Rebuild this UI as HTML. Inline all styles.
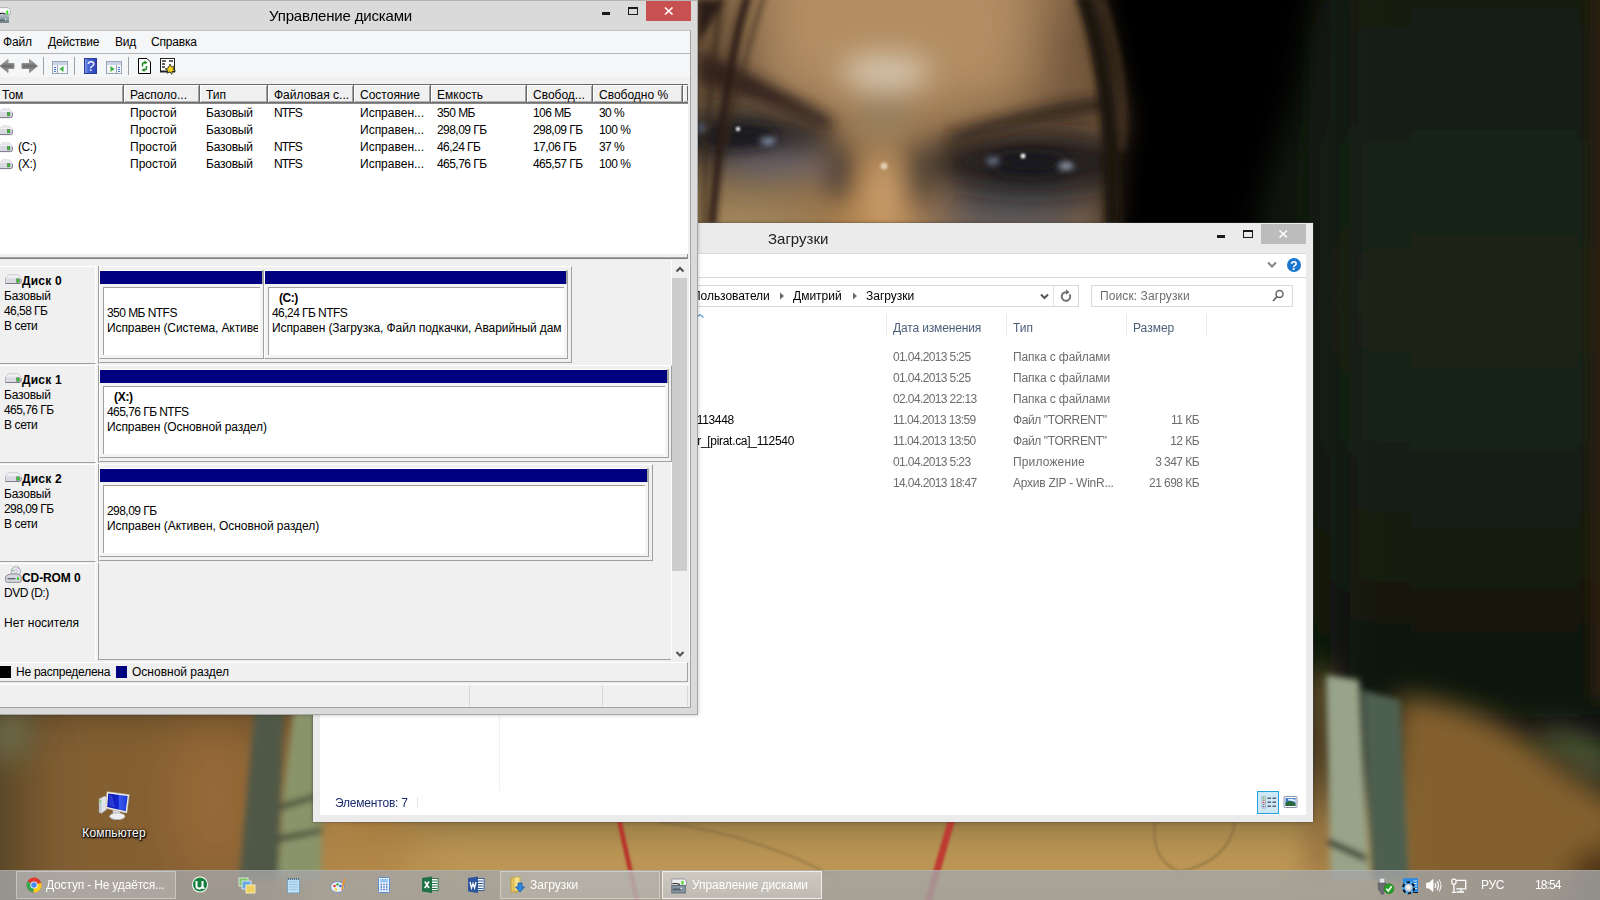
<!DOCTYPE html>
<html lang="ru"><head><meta charset="utf-8"><title>Рабочий стол</title>
<style>
*{box-sizing:border-box;margin:0;padding:0}
html,body{width:1600px;height:900px;overflow:hidden;background:#141b13}
body{font-family:"Liberation Sans",sans-serif;font-size:12px;color:#000;position:relative}
.abs,.t{position:absolute}
.t{white-space:nowrap;line-height:16px;font-size:12px}
.b{font-weight:bold}
#wall{position:absolute;left:0;top:0;width:1600px;height:900px}
svg{position:absolute;overflow:visible}
.win{position:absolute;overflow:hidden}
.n{letter-spacing:-0.55px}
.g{color:#6d6d6d}

</style></head><body>
<svg id="wall" width="1600" height="900" viewBox="0 0 1600 900">
<defs>
<filter id="b30" x="-20%" y="-20%" width="140%" height="140%"><feGaussianBlur stdDeviation="30"/></filter>
<filter id="b60" x="-50%" y="-50%" width="200%" height="200%"><feGaussianBlur stdDeviation="60"/></filter>
<filter id="b14" x="-20%" y="-20%" width="140%" height="140%"><feGaussianBlur stdDeviation="14"/></filter>
<filter id="b7" x="-20%" y="-20%" width="140%" height="140%"><feGaussianBlur stdDeviation="7"/></filter>
<filter id="b3" x="-20%" y="-20%" width="140%" height="140%"><feGaussianBlur stdDeviation="3"/></filter>
<filter id="b1" x="-20%" y="-20%" width="140%" height="140%"><feGaussianBlur stdDeviation="1.2"/></filter>
<linearGradient id="gg" x1="0" y1="0" x2="0" y2="1"><stop offset="0" stop-color="#121910"/><stop offset=".45" stop-color="#1b2517"/><stop offset=".75" stop-color="#151c11"/><stop offset="1" stop-color="#0d1109"/></linearGradient>
</defs>
<rect width="1600" height="900" fill="#11170f"/>
<g filter="url(#b30)"><rect x="1330" y="-60" width="330" height="800" fill="url(#gg)"/></g>
<g filter="url(#b7)"><rect x="1590" y="-30" width="40" height="730" fill="#2a1b11"/></g>
<!-- face skin -->
<g filter="url(#b30)">
<ellipse cx="895" cy="120" rx="300" ry="330" fill="#93704a"/>
<ellipse cx="890" cy="30" rx="200" ry="85" fill="#b48e64"/>
<ellipse cx="745" cy="142" rx="90" ry="40" fill="#403a36"/>
<ellipse cx="1035" cy="172" rx="110" ry="48" fill="#302e2e"/>
<ellipse cx="740" cy="225" rx="75" ry="30" fill="#ac9064"/>
<ellipse cx="882" cy="230" rx="38" ry="55" fill="#c89458"/>
<ellipse cx="1005" cy="225" rx="85" ry="22" fill="#59606a"/>
<ellipse cx="715" cy="40" rx="45" ry="70" fill="#5e4936"/>
<ellipse cx="1075" cy="50" rx="40" ry="80" fill="#6a5038"/>
</g>
<!-- eye sockets / shadows -->
<g filter="url(#b14)">
<ellipse cx="886" cy="72" rx="45" ry="18" fill="#d4c4ac"/>
<ellipse cx="750" cy="137" rx="80" ry="22" fill="#2a2826"/>
<ellipse cx="1032" cy="162" rx="100" ry="26" fill="#201e1f"/>
<ellipse cx="778" cy="166" rx="55" ry="9" fill="#79727c"/>
<ellipse cx="838" cy="172" rx="13" ry="28" fill="#40362e"/>
<ellipse cx="919" cy="174" rx="13" ry="32" fill="#4a4036"/>
<ellipse cx="884" cy="192" rx="14" ry="38" fill="#cfa270"/>
<ellipse cx="884" cy="118" rx="30" ry="22" fill="#98805e"/>
</g>
<!-- brows and eyes -->
<g filter="url(#b7)">
<path d="M698 50 Q765 78 834 122 L828 130 Q760 98 698 84Z" fill="#30241c"/>
<path d="M946 137 Q1030 106 1110 97 L1110 110 Q1030 119 950 143Z" fill="#261d17"/>
<ellipse cx="738" cy="136" rx="40" ry="11" fill="#14181c"/>
<ellipse cx="1030" cy="164" rx="40" ry="11" fill="#12161a"/>
</g>
<g filter="url(#b3)">
<ellipse cx="768" cy="141" rx="8" ry="3.500" fill="#8696ae"/>
<ellipse cx="993" cy="161" rx="7" ry="3.500" fill="#6e7c94"/>
<ellipse cx="1066" cy="166" rx="8" ry="4" fill="#929cac"/>
<ellipse cx="702" cy="128" rx="5" ry="5" fill="#55647e"/>
</g>
<!-- hair -->
<g filter="url(#b14)">
<path d="M1085 -40 L1320 -40 L1296 90 L1262 200 L1250 300 L1100 300 L1120 120Z" fill="#020202"/>
</g>
<g filter="url(#b3)">
<path d="M748 -5 Q726 60 712 225" stroke="#2a1d14" stroke-width="8" fill="none"/>
<path d="M722 -5 Q708 80 703 225" stroke="#33251a" stroke-width="5" fill="none" opacity=".8"/>
<path d="M764 -5 Q740 70 724 150" stroke="#3a2a1c" stroke-width="3" fill="none"/>
<path d="M698 0 L724 0 L698 44Z" fill="#2a1d14"/>
<path d="M1083 -5 Q1112 70 1114 225" stroke="#1a120c" stroke-width="16" fill="none"/>
<path d="M1102 0 Q1130 80 1122 150" stroke="#4a3420" stroke-width="4" fill="none"/>
</g>
<g filter="url(#b1)">
<circle cx="738" cy="129" r="2.300" fill="#dfe8e8"/>
<circle cx="1023" cy="156" r="2.500" fill="#eef2ee"/>
<circle cx="884" cy="166" r="3.500" fill="#e2ccb0"/>
</g>
<!-- lower body skin -->
<g filter="url(#b30)">
<rect x="-60" y="690" width="460" height="260" fill="#835f30"/>
<rect x="-70" y="690" width="95" height="260" fill="#4e4226"/>
<ellipse cx="215" cy="800" rx="40" ry="90" fill="#9a6a38"/>
<rect x="300" y="800" width="1150" height="140" fill="#bc9654"/>
<path d="M1400 740 Q1520 740 1660 850 L1660 940 L1400 940Z" fill="#84602e"/>
<ellipse cx="1450" cy="830" rx="50" ry="50" fill="#90703a"/>
<ellipse cx="370" cy="850" rx="45" ry="40" fill="#ac7c3e"/>
<ellipse cx="1600" cy="880" rx="60" ry="60" fill="#4a3018"/>
</g>
<g filter="url(#b14)">
<path d="M1396 696 Q1480 704 1540 755 T1625 805 L1625 900 L1396 900Z" fill="#84602e"/>
<ellipse cx="1610" cy="885" rx="45" ry="40" fill="#4e3419"/>
<path d="M1540 742 Q1580 760 1610 790 L1610 750 Q1580 735 1545 728Z" fill="#5c6340"/>
<rect x="1310" y="670" width="20" height="210" fill="#8a6638"/>
<ellipse cx="10" cy="735" rx="22" ry="26" fill="#6c6a48"/>
</g>
<g filter="url(#b3)">
<path d="M255 705 L284 705 L278 880 L239 880Z" fill="#4f5946"/>
<path d="M294 705 L324 705 L321 880 L278 880 L284 790Z" fill="#8a946a"/>
<path d="M281 804 L322 792 L322 797 L281 810Z" fill="#3e4432"/>
<path d="M278 836 L322 828 L322 833 L278 842Z" fill="#3e4432"/>
<path d="M1326 675 L1359 680 L1369 880 L1331 880Z" fill="#98a48a"/>
<path d="M1362 690 L1400 700 L1409 880 L1372 880Z" fill="#4e5e50"/>
<path d="M1328 838 L1366 855 L1366 862 L1328 845Z" fill="#2c3024"/>
</g>
<g filter="url(#b1)">
<path d="M618 815 L638 905" stroke="#b8322a" stroke-width="4.500" fill="none"/>
<path d="M953 815 L927 905" stroke="#bd3a30" stroke-width="7" fill="none"/>
<path d="M660 822 Q760 835 840 880" stroke="#6b5a36" stroke-width="2" fill="none" opacity=".4"/>
<path d="M1155 822 Q1150 860 1180 872 Q1230 860 1235 822" stroke="#6b5a36" stroke-width="2" fill="none" opacity=".45"/>
</g>
</svg>

<svg style="left:96px;top:790px" width="38" height="32" viewBox="0 0 38 32"><defs><linearGradient id="scr" x1="0" y1="0" x2="1" y2="0"><stop offset="0" stop-color="#0a12a8"/><stop offset=".55" stop-color="#1426d0"/><stop offset=".56" stop-color="#3a5cf0"/><stop offset="1" stop-color="#2038d8"/></linearGradient></defs><path d="M3.300 8.700 L8.500 6.200 L10.500 6.800 L10.500 19.500 L5.500 23.200 L3.300 22.200Z" fill="#dfe3e8" stroke="#aeb4bc" stroke-width=".6"/><path d="M3.300 8.700 L5.500 9.500 L5.500 23.200 L3.300 22.200Z" fill="#c4cad2"/><rect x="3.800" y="10.600" width="1.300" height="1.800" fill="#4de02a"/><path d="M16.500 20 L24 21.500 L24.500 25.500 L17.500 25Z" fill="#d4d8dc"/><ellipse cx="21.300" cy="26.300" rx="7.600" ry="3.300" fill="#eceef0" stroke="#b4bac2" stroke-width=".7"/><path d="M11 1.800 L33.200 4.700 L30.800 23 L9.800 18.200Z" fill="#f4f2e8" stroke="#c8c8c0" stroke-width=".6"/><path d="M12.300 3.400 L31.700 6 L29.700 21.300 L11.200 17Z" fill="url(#scr)"/><path d="M13 5 L16 5.400 L19.500 17.500 L12.500 16Z" fill="#3a58e8" opacity=".55"/></svg>
<div class="t " style="left:50px;top:825px;width:128px;text-align:center;color:#fff;text-shadow:0 1px 2px #000,0 0 3px #000,1px 1px 1px #000;letter-spacing:.15px">Компьютер</div>
<div class="abs" style="left:313px;top:223px;width:1000px;height:599px;background:#ebebeb;box-shadow:0 0 0 1px rgba(90,90,90,.25),0 0 4px rgba(0,0,0,.3)"></div>
<div class="t " style="left:768px;top:229px;font-size:15px;line-height:20px;color:#222">Загрузки</div>
<div class="abs" style="left:1261px;top:224px;width:45px;height:20px;background:#bcbcbc;"></div>
<svg style="left:1261px;top:224px" width="45" height="20" viewBox="0 0 45 20"><path d="M18.500 6.500 L26 13.500 M26 6.500 L18.500 13.500" stroke="#fff" stroke-width="1.600" fill="none"/></svg>
<div class="abs" style="left:1243px;top:230px;width:10px;height:8px;background:transparent;border:1px solid #1a1a1a;border-top-width:2px"></div>
<div class="abs" style="left:1217px;top:235px;width:8px;height:3px;background:#1a1a1a;"></div>
<div class="abs" style="left:320px;top:253px;width:986px;height:562px;background:#fff;"></div>
<div class="abs" style="left:320px;top:253px;width:986px;height:1px;background:#dadbdc;"></div>
<div class="abs" style="left:320px;top:277px;width:986px;height:1px;background:#dadbdc;"></div>
<svg style="left:1264px;top:257px" width="40" height="17" viewBox="0 0 40 17"><path d="M4 5.500 L8 9.500 L12 5.500" stroke="#858585" stroke-width="2" fill="none"/><circle cx="30" cy="8" r="7" fill="#1b76d0"/><text x="30" y="12.500" font-family="Liberation Sans,sans-serif" font-size="12" font-weight="bold" fill="#fff" text-anchor="middle">?</text></svg>
<div class="abs" style="left:600px;top:285px;width:479px;height:22px;background:#fff;border:1px solid #d9d9d9"></div>
<div class="abs" style="left:1053px;top:286px;width:1px;height:20px;background:#e3e3e3;"></div>
<div class="t " style="left:692px;top:288px;letter-spacing:-0.05px">Пользователи</div>
<div class="t " style="left:793px;top:288px;">Дмитрий</div>
<div class="t " style="left:866px;top:288px;">Загрузки</div>
<svg style="left:770px;top:285px" width="320" height="22" viewBox="0 0 320 22"><path d="M10 7.500 L14 11 L10 14.500Z M83 7.500 L87 11 L83 14.500Z" fill="#6a6a6a"/><path d="M271 9.500 L274.500 13 L278 9.500" stroke="#555" stroke-width="2" fill="none"/><path d="M299.700 9.400 A4.300 4.300 0 1 1 296 7.200" stroke="#6e6e6e" stroke-width="1.900" fill="none"/><path d="M296 4.300 L299.600 7.200 L296 9.800Z" fill="#6e6e6e"/></svg>
<div class="abs" style="left:1091px;top:285px;width:202px;height:22px;background:#fff;border:1px solid #d9d9d9"></div>
<div class="t " style="left:1100px;top:288px;color:#6d6d6d;letter-spacing:-0.1px;letter-spacing:0.1px">Поиск: Загрузки</div>
<svg style="left:1270px;top:288px" width="16" height="16" viewBox="0 0 16 16"><circle cx="9.500" cy="6" r="3.500" stroke="#666" stroke-width="1.500" fill="none"/><path d="M7 8.500 L3 13" stroke="#666" stroke-width="1.800"/></svg>
<div class="abs" style="left:886px;top:314px;width:1px;height:23px;background:#e8eaec;"></div>
<div class="abs" style="left:1006px;top:314px;width:1px;height:23px;background:#e8eaec;"></div>
<div class="abs" style="left:1126px;top:314px;width:1px;height:23px;background:#e8eaec;"></div>
<div class="abs" style="left:1206px;top:314px;width:1px;height:23px;background:#e8eaec;"></div>
<svg style="left:695px;top:313px" width="10" height="6" viewBox="0 0 10 6"><path d="M1.500 4.500 L5 1.500 L8.500 4.500" stroke="#5a9ad8" stroke-width="1.200" fill="none"/></svg>
<div class="t " style="left:893px;top:320px;color:#4c607a;letter-spacing:-0.15px">Дата изменения</div>
<div class="t " style="left:1013px;top:320px;color:#4c607a">Тип</div>
<div class="t " style="left:1133px;top:320px;color:#4c607a">Размер</div>
<div class="t n g" style="left:893px;top:349px;letter-spacing:-0.62px">01.04.2013 5:25</div>
<div class="t g" style="left:1013px;top:349px;letter-spacing:-0.1px">Папка с файлами</div>
<div class="t n g" style="left:893px;top:370px;letter-spacing:-0.62px">01.04.2013 5:25</div>
<div class="t g" style="left:1013px;top:370px;letter-spacing:-0.1px">Папка с файлами</div>
<div class="t n g" style="left:893px;top:391px;letter-spacing:-0.62px">02.04.2013 22:13</div>
<div class="t g" style="left:1013px;top:391px;letter-spacing:-0.1px">Папка с файлами</div>
<div class="t" style="right:866px;top:412px;letter-spacing:-0.3px">LARA_CROFT_113448</div>
<div class="t n g" style="left:893px;top:412px;letter-spacing:-0.62px">11.04.2013 13:59</div>
<div class="t g" style="left:1013px;top:412px;letter-spacing:-0.1px;letter-spacing:-0.4px">Файл "TORRENT"</div>
<div class="t g n" style="right:401px;top:412px">11 КБ</div>
<div class="t" style="right:806px;top:433px;letter-spacing:-0.3px">Tomb_Raider_[pirat.ca]_112540</div>
<div class="t n g" style="left:893px;top:433px;letter-spacing:-0.62px">11.04.2013 13:50</div>
<div class="t g" style="left:1013px;top:433px;letter-spacing:-0.1px;letter-spacing:-0.4px">Файл "TORRENT"</div>
<div class="t g n" style="right:401px;top:433px">12 КБ</div>
<div class="t n g" style="left:893px;top:454px;letter-spacing:-0.62px">01.04.2013 5:23</div>
<div class="t g" style="left:1013px;top:454px;letter-spacing:-0.1px;letter-spacing:0.15px">Приложение</div>
<div class="t g n" style="right:401px;top:454px">3 347 КБ</div>
<div class="t n g" style="left:893px;top:475px;letter-spacing:-0.62px">14.04.2013 18:47</div>
<div class="t g" style="left:1013px;top:475px;letter-spacing:-0.1px;letter-spacing:-0.25px">Архив ZIP - WinR...</div>
<div class="t g n" style="right:401px;top:475px">21 698 КБ</div>
<div class="abs" style="left:499px;top:314px;width:1px;height:477px;background:#f0f0f0;"></div>
<div class="t " style="left:335px;top:795px;color:#1c2c70;letter-spacing:-0.2px">Элементов: 7</div>
<div class="abs" style="left:417px;top:797px;width:1px;height:11px;background:#e5e5e5;"></div>
<div class="abs" style="left:1257px;top:791px;width:22px;height:23px;background:#cce8f7;border:1px solid #26a0da"></div>
<svg style="left:1257px;top:791px" width="45" height="23" viewBox="0 0 45 23"><g fill="#fff" stroke="#8a8f98" stroke-width=".8"><rect x="5" y="5.500" width="3.500" height="3.500" rx=".8"/><rect x="5" y="9.500" width="3.500" height="3.500" rx=".8"/><rect x="5" y="13.500" width="3.500" height="3.500" rx=".8"/></g><circle cx="6.750" cy="7.250" r=".8" fill="#393"/><circle cx="6.750" cy="11.250" r=".8" fill="#d22"/><circle cx="6.750" cy="15.250" r=".8" fill="#24c"/><path d="M10.500 7.250h3.500M15.500 7.250h3.500M10.500 11.250h3.500M15.500 11.250h3.500M10.500 15.250h3.500M15.500 15.250h3.500" stroke="#5a6070" stroke-width="1.300"/><rect x="27" y="5.500" width="13" height="11" rx="1" fill="#fff" stroke="#8a93a8"/><rect x="28.500" y="7" width="10" height="8" fill="#3a7ad0"/><path d="M28.500 15 L28.500 12 Q32 8 38.500 12.500 L38.500 15Z" fill="#2a6a3a"/><path d="M31 8 Q35 7 38.500 9 L38.500 11 Q34 9 31 9.500Z" fill="#dfeffc"/></svg>
<div class="win" style="left:0;top:0;width:720px;height:740px">
<div class="abs" style="left:-10px;top:0;width:708px;height:715px;background:#dadada;border:1px solid #a6a6a6;border-top-color:#b4b4b4;box-shadow:0 0 4px rgba(0,0,0,.25)"></div>
<div class="t " style="left:269px;top:6px;font-size:15px;line-height:20px;letter-spacing:-0.17px">Управление дисками</div>
<svg style="left:0;top:6px" width="12" height="18" viewBox="0 0 12 18"><defs><linearGradient id="ti1" x1="0" y1="0" x2="0" y2="1"><stop offset="0" stop-color="#e8e8ec"/><stop offset=".35" stop-color="#fff"/><stop offset="1" stop-color="#d4d4dc"/></linearGradient><linearGradient id="ti2" x1="0" y1="0" x2="0" y2="1"><stop offset="0" stop-color="#aebcc4"/><stop offset="1" stop-color="#6e7e88"/></linearGradient></defs><path d="M-1 1.500 H7 Q10.500 1.800 10.500 5 V7.500 Q10.500 9 9 9 H-1Z" fill="url(#ti1)" stroke="#a4a4b2" stroke-width=".7"/><path d="M0 7.500 Q2.500 6.800 5.500 8.200" stroke="#111" stroke-width="1" fill="none"/><rect x="6.300" y="4.500" width="1.900" height="4.200" fill="#3be01e"/><path d="M-1 9 H9 V17 H-1Z" fill="url(#ti2)"/><path d="M0 13.500 H6.500 V15 H0Z" fill="#5a6a74"/><rect x="5" y="12.700" width="1.300" height="1.600" fill="#f4f4f4"/></svg>
<div class="abs" style="left:646px;top:1px;width:45px;height:20px;background:#c75050;"></div>
<svg style="left:646px;top:1px" width="45" height="20" viewBox="0 0 45 20"><path d="M19 6.5 L26.5 13.5 M26.5 6.5 L19 13.5" stroke="#fff" stroke-width="1.700" fill="none"/></svg>
<div class="abs" style="left:628px;top:7px;width:10px;height:8px;background:transparent;border:1px solid #1a1a1a;border-top-width:2px"></div>
<div class="abs" style="left:602px;top:12px;width:8px;height:3px;background:#1a1a1a;"></div>
<div class="abs" style="left:-2px;top:30px;width:693px;height:678px;background:#f0f0f0;border:1px solid #a3a3a3;border-top-color:#c3c3c3"></div>
<div class="abs" style="left:0px;top:31px;width:690px;height:22px;background:#f5f6f7;"></div>
<div class="abs" style="left:0px;top:53px;width:690px;height:1px;background:#b2b4b8;"></div>
<div class="abs" style="left:0px;top:54px;width:690px;height:23px;background:#f5f6f7;"></div>
<div class="t " style="left:3px;top:34px;letter-spacing:-0.2px">Файл</div>
<div class="t " style="left:48px;top:34px;letter-spacing:-0.2px">Действие</div>
<div class="t " style="left:115px;top:34px;letter-spacing:-0.2px">Вид</div>
<div class="t " style="left:151px;top:34px;letter-spacing:-0.2px">Справка</div>
<svg style="left:0;top:56px" width="180" height="20" viewBox="0 0 180 20"><defs><linearGradient id="ag" x1="0" y1="0" x2="0" y2="1"><stop offset="0" stop-color="#b4b4b4"/><stop offset=".5" stop-color="#6c6c6c"/><stop offset="1" stop-color="#a4a4a4"/></linearGradient><linearGradient id="hg" x1="0" y1="0" x2="1" y2="0"><stop offset="0" stop-color="#8ea4ea"/><stop offset=".3" stop-color="#4a66d4"/><stop offset="1" stop-color="#2a44b8"/></linearGradient></defs><path d="M0 10 L8 3.500 L8 7.500 L14 7.500 L14 12.500 L8 12.500 L8 16.500Z" fill="url(#ag)" stroke="#8e8e8e" stroke-width="1"/><path d="M37.500 10 L29.500 3.500 L29.500 7.500 L22 7.500 L22 12.500 L29.500 12.500 L29.500 16.500Z" fill="url(#ag)" stroke="#8e8e8e" stroke-width="1"/><path d="M43.5 1 V19 M74.5 1 V19 M128.5 1 V19" stroke="#a0a0a0" stroke-width="1"/><rect x="52.5" y="5.5" width="15" height="12" fill="#f4f6fa" stroke="#9aa6b8"/><rect x="53" y="6" width="14" height="3" fill="#c9d3e4"/><path d="M57.5 9 V17" stroke="#9aa6b8"/><path d="M54 11.5h2M54 13.5h2M54 15.5h2" stroke="#4a78c8"/><path d="M59.5 13 L63.5 10 V16Z" fill="#3cb43c"/><rect x="84.500" y="2.500" width="12" height="15" fill="url(#hg)" stroke="#2c3c96"/><text x="91" y="15" font-family="Liberation Sans,sans-serif" font-size="14" fill="#fff" text-anchor="middle">?</text><rect x="106.500" y="5.500" width="15" height="12" fill="#f4f6fa" stroke="#9aa6b8"/><rect x="107" y="6" width="14" height="3" fill="#c9d3e4"/><path d="M116.500 9 V17" stroke="#9aa6b8"/><path d="M118 11.500h2M118 13.500h2M118 15.500h2" stroke="#4a78c8"/><path d="M114.500 13 L110.500 10 V16Z" fill="#3cb43c"/><path d="M138.500 2.500 H147 L150.500 6 V17.500 H138.500Z" fill="#fff" stroke="#000"/><path d="M142.500 10.500 V8.500 Q142.500 6.500 145 6.500 M146.500 10 V12 Q146.500 14 144 14" stroke="#1f8a1f" stroke-width="1.500" fill="none"/><path d="M144.500 4.500 L147.500 6.500 L144.500 8.500Z M144.500 12 L141.500 14 L144.500 16Z" fill="#1f8a1f"/><rect x="160.500" y="2.500" width="14" height="13" fill="#fff" stroke="#222"/><path d="M160 15.500 H175" stroke="#222" stroke-width="2"/><path d="M162 5h4M162 8h3M162 11h3M169 5h4" stroke="#333" stroke-width="1.500"/><path d="M170 8 l1.500 3 l3 -1 l-1.500 3 l2.500 2 l-3.200 .3 l-.5 3 l-2 -2.500 l-2.800 1.500 l.8 -3 l-2.600 -1.500 l3 -.8Z" fill="#f4d21c" stroke="#222" stroke-width=".8"/></svg>
<div class="abs" style="left:0px;top:84px;width:688px;height:1px;background:#696969;"></div>
<div class="abs" style="left:0px;top:85px;width:688px;height:18px;background:#f0f0f0;"></div>
<div class="abs" style="left:687px;top:84px;width:1px;height:20px;background:#696969;"></div>
<div class="abs" style="left:0px;top:102px;width:688px;height:1px;background:#6e6e6e;"></div>
<div class="abs" style="left:0px;top:103px;width:688px;height:1px;background:#8a8a8a;"></div>
<div class="abs" style="left:0px;top:101px;width:688px;height:1px;background:#b4b4b4;"></div>
<div class="abs" style="left:0px;top:85px;width:688px;height:1px;background:#fff;"></div>
<div class="abs" style="left:122px;top:86px;width:1px;height:16px;background:#a0a0a0;"></div>
<div class="abs" style="left:123px;top:85px;width:1px;height:18px;background:#696969;"></div>
<div class="abs" style="left:124px;top:85px;width:1px;height:17px;background:#fff;"></div>
<div class="abs" style="left:198px;top:86px;width:1px;height:16px;background:#a0a0a0;"></div>
<div class="abs" style="left:199px;top:85px;width:1px;height:18px;background:#696969;"></div>
<div class="abs" style="left:200px;top:85px;width:1px;height:17px;background:#fff;"></div>
<div class="abs" style="left:266px;top:86px;width:1px;height:16px;background:#a0a0a0;"></div>
<div class="abs" style="left:267px;top:85px;width:1px;height:18px;background:#696969;"></div>
<div class="abs" style="left:268px;top:85px;width:1px;height:17px;background:#fff;"></div>
<div class="abs" style="left:352px;top:86px;width:1px;height:16px;background:#a0a0a0;"></div>
<div class="abs" style="left:353px;top:85px;width:1px;height:18px;background:#696969;"></div>
<div class="abs" style="left:354px;top:85px;width:1px;height:17px;background:#fff;"></div>
<div class="abs" style="left:429px;top:86px;width:1px;height:16px;background:#a0a0a0;"></div>
<div class="abs" style="left:430px;top:85px;width:1px;height:18px;background:#696969;"></div>
<div class="abs" style="left:431px;top:85px;width:1px;height:17px;background:#fff;"></div>
<div class="abs" style="left:525px;top:86px;width:1px;height:16px;background:#a0a0a0;"></div>
<div class="abs" style="left:526px;top:85px;width:1px;height:18px;background:#696969;"></div>
<div class="abs" style="left:527px;top:85px;width:1px;height:17px;background:#fff;"></div>
<div class="abs" style="left:591px;top:86px;width:1px;height:16px;background:#a0a0a0;"></div>
<div class="abs" style="left:592px;top:85px;width:1px;height:18px;background:#696969;"></div>
<div class="abs" style="left:593px;top:85px;width:1px;height:17px;background:#fff;"></div>
<div class="abs" style="left:681px;top:86px;width:1px;height:16px;background:#a0a0a0;"></div>
<div class="abs" style="left:682px;top:85px;width:1px;height:18px;background:#696969;"></div>
<div class="abs" style="left:683px;top:85px;width:1px;height:17px;background:#fff;"></div>
<div class="t " style="left:2px;top:87px;">Том</div>
<div class="t " style="left:130px;top:87px;">Располо...</div>
<div class="t " style="left:206px;top:87px;">Тип</div>
<div class="t " style="left:274px;top:87px;">Файловая с...</div>
<div class="t " style="left:360px;top:87px;">Состояние</div>
<div class="t " style="left:437px;top:87px;">Емкость</div>
<div class="t " style="left:533px;top:87px;">Свобод...</div>
<div class="t " style="left:599px;top:87px;">Свободно %</div>
<div class="abs" style="left:0px;top:104px;width:688px;height:149px;background:#fff;"></div>
<svg style="left:-1px;top:108px" width="14" height="11" viewBox="0 0 14 11"><path d="M1.500 3 L3.500 .8 H10 L12.500 3Z" fill="#f2f2f6" stroke="#c4c4cc" stroke-width=".6"/><path d="M0 2.800 H11.500 Q13.500 2.800 13.500 4.800 V7.800 Q13.500 9.800 11.500 9.800 H0Z" fill="#d9d9e2"/><path d="M0 3.300 H12" stroke="#f4f4f8" stroke-width="1"/><path d="M0 9.600 H11.500 Q13.400 9.600 13.400 7.800 V4.800" stroke="#77778a" stroke-width="1" fill="none"/><rect x="8.300" y="4.500" width="2.600" height="3.400" fill="#35c02a" stroke="#4a6a4a" stroke-width=".5"/></svg>
<div class="t " style="left:130px;top:105px;">Простой</div>
<div class="t " style="left:206px;top:105px;letter-spacing:-0.2px">Базовый</div>
<div class="t " style="left:274px;top:105px;letter-spacing:-0.9px">NTFS</div>
<div class="t " style="left:360px;top:105px;">Исправен...</div>
<div class="t n" style="left:437px;top:105px;">350 МБ</div>
<div class="t n" style="left:533px;top:105px;">106 МБ</div>
<div class="t n" style="left:599px;top:105px;">30 %</div>
<svg style="left:-1px;top:125px" width="14" height="11" viewBox="0 0 14 11"><path d="M1.500 3 L3.500 .8 H10 L12.500 3Z" fill="#f2f2f6" stroke="#c4c4cc" stroke-width=".6"/><path d="M0 2.800 H11.500 Q13.500 2.800 13.500 4.800 V7.800 Q13.500 9.800 11.500 9.800 H0Z" fill="#d9d9e2"/><path d="M0 3.300 H12" stroke="#f4f4f8" stroke-width="1"/><path d="M0 9.600 H11.500 Q13.400 9.600 13.400 7.800 V4.800" stroke="#77778a" stroke-width="1" fill="none"/><rect x="8.300" y="4.500" width="2.600" height="3.400" fill="#35c02a" stroke="#4a6a4a" stroke-width=".5"/></svg>
<div class="t " style="left:130px;top:122px;">Простой</div>
<div class="t " style="left:206px;top:122px;letter-spacing:-0.2px">Базовый</div>
<div class="t " style="left:360px;top:122px;">Исправен...</div>
<div class="t n" style="left:437px;top:122px;">298,09 ГБ</div>
<div class="t n" style="left:533px;top:122px;">298,09 ГБ</div>
<div class="t n" style="left:599px;top:122px;">100 %</div>
<svg style="left:-1px;top:142px" width="14" height="11" viewBox="0 0 14 11"><path d="M1.500 3 L3.500 .8 H10 L12.500 3Z" fill="#f2f2f6" stroke="#c4c4cc" stroke-width=".6"/><path d="M0 2.800 H11.500 Q13.500 2.800 13.500 4.800 V7.800 Q13.500 9.800 11.500 9.800 H0Z" fill="#d9d9e2"/><path d="M0 3.300 H12" stroke="#f4f4f8" stroke-width="1"/><path d="M0 9.600 H11.500 Q13.400 9.600 13.400 7.800 V4.800" stroke="#77778a" stroke-width="1" fill="none"/><rect x="8.300" y="4.500" width="2.600" height="3.400" fill="#35c02a" stroke="#4a6a4a" stroke-width=".5"/></svg>
<div class="t " style="left:18px;top:139px;letter-spacing:-0.45px">(C:)</div>
<div class="t " style="left:130px;top:139px;">Простой</div>
<div class="t " style="left:206px;top:139px;letter-spacing:-0.2px">Базовый</div>
<div class="t " style="left:274px;top:139px;letter-spacing:-0.9px">NTFS</div>
<div class="t " style="left:360px;top:139px;">Исправен...</div>
<div class="t n" style="left:437px;top:139px;">46,24 ГБ</div>
<div class="t n" style="left:533px;top:139px;">17,06 ГБ</div>
<div class="t n" style="left:599px;top:139px;">37 %</div>
<svg style="left:-1px;top:159px" width="14" height="11" viewBox="0 0 14 11"><path d="M1.500 3 L3.500 .8 H10 L12.500 3Z" fill="#f2f2f6" stroke="#c4c4cc" stroke-width=".6"/><path d="M0 2.800 H11.500 Q13.500 2.800 13.500 4.800 V7.800 Q13.500 9.800 11.500 9.800 H0Z" fill="#d9d9e2"/><path d="M0 3.300 H12" stroke="#f4f4f8" stroke-width="1"/><path d="M0 9.600 H11.500 Q13.400 9.600 13.400 7.800 V4.800" stroke="#77778a" stroke-width="1" fill="none"/><rect x="8.300" y="4.500" width="2.600" height="3.400" fill="#35c02a" stroke="#4a6a4a" stroke-width=".5"/></svg>
<div class="t " style="left:18px;top:156px;letter-spacing:-0.3px">(X:)</div>
<div class="t " style="left:130px;top:156px;">Простой</div>
<div class="t " style="left:206px;top:156px;letter-spacing:-0.2px">Базовый</div>
<div class="t " style="left:274px;top:156px;letter-spacing:-0.9px">NTFS</div>
<div class="t " style="left:360px;top:156px;">Исправен...</div>
<div class="t n" style="left:437px;top:156px;">465,76 ГБ</div>
<div class="t n" style="left:533px;top:156px;">465,57 ГБ</div>
<div class="t n" style="left:599px;top:156px;">100 %</div>
<div class="abs" style="left:0px;top:253px;width:690px;height:7px;background:#f0f0f0;"></div>
<div class="abs" style="left:0px;top:253px;width:688px;height:1px;background:#fff;"></div>
<div class="abs" style="left:0px;top:257px;width:688px;height:1px;background:#a8a8a8;"></div>
<div class="abs" style="left:0px;top:258px;width:688px;height:1px;background:#7c7c7c;"></div>
<div class="abs" style="left:687px;top:254px;width:1px;height:5px;background:#8c8c8c;"></div>
<div class="abs" style="left:0px;top:259px;width:672px;height:401px;background:#f0f0f0;"></div>
<div class="abs" style="left:672px;top:260px;width:17px;height:400px;background:#f0f0f0;"></div>
<div class="abs" style="left:672px;top:278px;width:15px;height:293px;background:#cdcdcd;"></div>
<div class="abs" style="left:671px;top:260px;width:1px;height:400px;background:#fff;"></div>
<div class="abs" style="left:689px;top:259px;width:1px;height:401px;background:#fff;"></div>
<svg style="left:672px;top:260px" width="17" height="400" viewBox="0 0 17 400"><path d="M4.500 11.500 L8 8 L11.500 11.500" stroke="#505050" stroke-width="2" fill="none"/><path d="M4.500 392 L8 395.500 L11.500 392" stroke="#505050" stroke-width="2" fill="none"/></svg>
<div class="abs" style="left:0px;top:266px;width:96px;height:98px;background:#f0f0f0;border-right:1px solid #fff;border-bottom:1px solid #a0a0a0;border-top:1px solid #fff"></div>
<div class="abs" style="left:96px;top:266px;width:2px;height:99px;background:#f4f4f4;"></div>
<div class="abs" style="left:98px;top:266px;width:1px;height:99px;background:#a0a0a0;"></div>
<div class="abs" style="left:95px;top:364px;width:4px;height:1px;background:#fff;"></div>

<svg style="left:5px;top:274px" width="17" height="11" viewBox="0 0 17 11"><path d="M1.500 3.500 L3.500 .8 H13 L15.500 3.500Z" fill="#f4f4f8" stroke="#b8b8c0" stroke-width=".7"/><path d="M.3 3.300 H14 Q16.300 3.300 16.300 5.500 V7.500 Q16.300 9.700 14 9.700 H.3Z" fill="#dadae3"/><path d="M.3 3.800 H15" stroke="#f2f2f6" stroke-width="1"/><path d="M.3 9.500 H14 Q16.200 9.500 16.200 7.500 V5.200" stroke="#7c7c8c" stroke-width="1" fill="none"/><path d="M.5 3.500 V9.500" stroke="#a8a8b4" stroke-width=".8"/><rect x="11.600" y="4.800" width="2.800" height="3.400" fill="#35c02a" stroke="#5a6a5a" stroke-width=".5"/></svg>
<div class="t b" style="left:22px;top:273px;letter-spacing:-0.1px;letter-spacing:0.2px">Диск 0</div>
<div class="t " style="left:4px;top:288px;letter-spacing:-0.2px">Базовый</div>
<div class="t n" style="left:4px;top:303px;">46,58 ГБ</div>
<div class="t " style="left:4px;top:318px;letter-spacing:-0.4px">В сети</div>
<div class="abs" style="left:99px;top:266px;width:473px;height:97px;background:#f0f0f0;border-top:1px solid #fff;border-left:1px solid #fff;border-right:1px solid #a0a0a0;border-bottom:1px solid #a0a0a0"></div>
<div class="abs" style="left:99px;top:270px;width:165px;height:89px;background:#f4f4f4;border-top:1px solid #fff;border-left:1px solid #fff;border-right:1px solid #a0a0a0;border-bottom:1px solid #a0a0a0"></div>
<div class="abs" style="left:100px;top:271px;width:162px;height:13px;background:#000080;"></div>
<div class="abs" style="left:262px;top:270px;width:1px;height:14px;background:#a4a49c;"></div>
<div class="abs" style="left:103px;top:287px;width:157px;height:68px;background:#fff;border-top:1px solid #a0a0a0;border-left:1px solid #a0a0a0"></div>
<div class="abs" style="left:107px;top:289px;width:151px;height:64px;overflow:hidden">
<div class="t n" style="left:0px;top:16px;">350 МБ NTFS</div>
<div class="t " style="left:0px;top:31px;letter-spacing:-0.1px">Исправен (Система, Активен, Основной раздел)</div>
</div>
<div class="abs" style="left:264px;top:270px;width:304px;height:89px;background:#f4f4f4;border-top:1px solid #fff;border-left:1px solid #fff;border-right:1px solid #a0a0a0;border-bottom:1px solid #a0a0a0"></div>
<div class="abs" style="left:265px;top:271px;width:301px;height:13px;background:#000080;"></div>
<div class="abs" style="left:566px;top:270px;width:1px;height:14px;background:#a4a49c;"></div>
<div class="abs" style="left:268px;top:287px;width:296px;height:68px;background:#fff;border-top:1px solid #a0a0a0;border-left:1px solid #a0a0a0"></div>
<div class="abs" style="left:272px;top:289px;width:290px;height:64px;overflow:hidden">
<div class="t b" style="left:7px;top:1px;letter-spacing:-0.3px;letter-spacing:-0.45px">(C:)</div>
<div class="t n" style="left:0px;top:16px;">46,24 ГБ NTFS</div>
<div class="t " style="left:0px;top:31px;letter-spacing:-0.1px">Исправен (Загрузка, Файл подкачки, Аварийный дамп памяти, Основной раздел)</div>
</div>
<div class="abs" style="left:0px;top:365px;width:96px;height:98px;background:#f0f0f0;border-right:1px solid #fff;border-bottom:1px solid #a0a0a0;border-top:1px solid #fff"></div>
<div class="abs" style="left:96px;top:365px;width:2px;height:99px;background:#f4f4f4;"></div>
<div class="abs" style="left:98px;top:365px;width:1px;height:99px;background:#a0a0a0;"></div>
<div class="abs" style="left:95px;top:463px;width:4px;height:1px;background:#fff;"></div>

<svg style="left:5px;top:373px" width="17" height="11" viewBox="0 0 17 11"><path d="M1.500 3.500 L3.500 .8 H13 L15.500 3.500Z" fill="#f4f4f8" stroke="#b8b8c0" stroke-width=".7"/><path d="M.3 3.300 H14 Q16.300 3.300 16.300 5.500 V7.500 Q16.300 9.700 14 9.700 H.3Z" fill="#dadae3"/><path d="M.3 3.800 H15" stroke="#f2f2f6" stroke-width="1"/><path d="M.3 9.500 H14 Q16.200 9.500 16.200 7.500 V5.200" stroke="#7c7c8c" stroke-width="1" fill="none"/><path d="M.5 3.500 V9.500" stroke="#a8a8b4" stroke-width=".8"/><rect x="11.600" y="4.800" width="2.800" height="3.400" fill="#35c02a" stroke="#5a6a5a" stroke-width=".5"/></svg>
<div class="t b" style="left:22px;top:372px;letter-spacing:-0.1px;letter-spacing:0.2px">Диск 1</div>
<div class="t " style="left:4px;top:387px;letter-spacing:-0.2px">Базовый</div>
<div class="t n" style="left:4px;top:402px;">465,76 ГБ</div>
<div class="t " style="left:4px;top:417px;letter-spacing:-0.4px">В сети</div>
<div class="abs" style="left:99px;top:365px;width:573px;height:97px;background:#f0f0f0;border-top:1px solid #fff;border-left:1px solid #fff;border-right:1px solid #a0a0a0;border-bottom:1px solid #a0a0a0"></div>
<div class="abs" style="left:99px;top:369px;width:570px;height:89px;background:#f4f4f4;border-top:1px solid #fff;border-left:1px solid #fff;border-right:1px solid #a0a0a0;border-bottom:1px solid #a0a0a0"></div>
<div class="abs" style="left:100px;top:370px;width:567px;height:13px;background:#000080;"></div>
<div class="abs" style="left:667px;top:369px;width:1px;height:14px;background:#a4a49c;"></div>
<div class="abs" style="left:103px;top:386px;width:562px;height:68px;background:#fff;border-top:1px solid #a0a0a0;border-left:1px solid #a0a0a0"></div>
<div class="abs" style="left:107px;top:388px;width:556px;height:64px;overflow:hidden">
<div class="t b" style="left:7px;top:1px;letter-spacing:-0.3px;letter-spacing:-0.3px">(X:)</div>
<div class="t n" style="left:0px;top:16px;">465,76 ГБ NTFS</div>
<div class="t " style="left:0px;top:31px;letter-spacing:-0.1px">Исправен (Основной раздел)</div>
</div>
<div class="abs" style="left:0px;top:464px;width:96px;height:98px;background:#f0f0f0;border-right:1px solid #fff;border-bottom:1px solid #a0a0a0;border-top:1px solid #fff"></div>
<div class="abs" style="left:96px;top:464px;width:2px;height:99px;background:#f4f4f4;"></div>
<div class="abs" style="left:98px;top:464px;width:1px;height:99px;background:#a0a0a0;"></div>
<div class="abs" style="left:95px;top:562px;width:4px;height:1px;background:#fff;"></div>

<svg style="left:5px;top:472px" width="17" height="11" viewBox="0 0 17 11"><path d="M1.500 3.500 L3.500 .8 H13 L15.500 3.500Z" fill="#f4f4f8" stroke="#b8b8c0" stroke-width=".7"/><path d="M.3 3.300 H14 Q16.300 3.300 16.300 5.500 V7.500 Q16.300 9.700 14 9.700 H.3Z" fill="#dadae3"/><path d="M.3 3.800 H15" stroke="#f2f2f6" stroke-width="1"/><path d="M.3 9.500 H14 Q16.200 9.500 16.200 7.500 V5.200" stroke="#7c7c8c" stroke-width="1" fill="none"/><path d="M.5 3.500 V9.500" stroke="#a8a8b4" stroke-width=".8"/><rect x="11.600" y="4.800" width="2.800" height="3.400" fill="#35c02a" stroke="#5a6a5a" stroke-width=".5"/></svg>
<div class="t b" style="left:22px;top:471px;letter-spacing:-0.1px;letter-spacing:0.2px">Диск 2</div>
<div class="t " style="left:4px;top:486px;letter-spacing:-0.2px">Базовый</div>
<div class="t n" style="left:4px;top:501px;">298,09 ГБ</div>
<div class="t " style="left:4px;top:516px;letter-spacing:-0.4px">В сети</div>
<div class="abs" style="left:99px;top:464px;width:554px;height:97px;background:#f0f0f0;border-top:1px solid #fff;border-left:1px solid #fff;border-right:1px solid #a0a0a0;border-bottom:1px solid #a0a0a0"></div>
<div class="abs" style="left:99px;top:468px;width:550px;height:89px;background:#f4f4f4;border-top:1px solid #fff;border-left:1px solid #fff;border-right:1px solid #a0a0a0;border-bottom:1px solid #a0a0a0"></div>
<div class="abs" style="left:100px;top:469px;width:547px;height:13px;background:#000080;"></div>
<div class="abs" style="left:647px;top:468px;width:1px;height:14px;background:#a4a49c;"></div>
<div class="abs" style="left:103px;top:485px;width:542px;height:68px;background:#fff;border-top:1px solid #a0a0a0;border-left:1px solid #a0a0a0"></div>
<div class="abs" style="left:107px;top:487px;width:536px;height:64px;overflow:hidden">
<div class="t n" style="left:0px;top:16px;">298,09 ГБ</div>
<div class="t " style="left:0px;top:31px;letter-spacing:-0.1px;letter-spacing:-0.06px">Исправен (Активен, Основной раздел)</div>
</div>
<div class="abs" style="left:0px;top:563px;width:96px;height:98px;background:#f0f0f0;border-right:1px solid #fff;border-bottom:1px solid #a0a0a0;border-top:1px solid #fff"></div>
<div class="abs" style="left:96px;top:563px;width:2px;height:99px;background:#f4f4f4;"></div>
<div class="abs" style="left:98px;top:563px;width:1px;height:99px;background:#a0a0a0;"></div>
<div class="abs" style="left:95px;top:661px;width:4px;height:1px;background:#fff;"></div>

<svg style="left:5px;top:565px" width="17" height="19" viewBox="0 0 17 19"><circle cx="10.900" cy="6.300" r="4.700" fill="#e6e6ee" stroke="#9a9aa6" stroke-width=".8"/><circle cx="10.900" cy="6.300" r="1.400" fill="#fff" stroke="#9a9aa6" stroke-width=".6"/><circle cx="8" cy="5.500" r=".8" fill="#4c4"/><circle cx="13.300" cy="3" r=".6" fill="#d3d"/><path d="M.6 12 Q.6 11 1.800 10.600 L5 9 H12.500 L15.300 10.600 Q16.200 11 16.200 12 V15.500 Q16.200 17.300 14.500 17.300 H2.300 Q.6 17.300 .6 15.500Z" fill="#d8d8e0" stroke="#80808c" stroke-width=".9"/><path d="M2.500 13.700 H10.500" stroke="#5a5a66" stroke-width="1.300"/><rect x="12" y="12.200" width="2" height="2.800" fill="#3c3"/></svg>
<div class="t b" style="left:22px;top:570px;letter-spacing:-0.1px">CD-ROM 0</div>
<div class="t " style="left:4px;top:585px;letter-spacing:-0.5px">DVD (D:)</div>
<div class="t " style="left:4px;top:615px;">Нет носителя</div>
<div class="abs" style="left:99px;top:659px;width:572px;height:1px;background:#a0a0a0;"></div>
<div class="abs" style="left:0px;top:660px;width:690px;height:2px;background:#f0f0f0;"></div>
<div class="abs" style="left:0px;top:662px;width:688px;height:20px;background:#f0f0f0;border-top:1px solid #fff;border-right:1px solid #a0a0a0;border-bottom:1px solid #a0a0a0"></div>
<div class="abs" style="left:0px;top:666px;width:11px;height:12px;background:#000;"></div>
<div class="abs" style="left:116px;top:666px;width:11px;height:12px;background:#000080;border:1px solid #fff;border-width:0"></div>
<div class="t " style="left:16px;top:664px;letter-spacing:-0.25px">Не распределена</div>
<div class="t " style="left:132px;top:664px;">Основной раздел</div>
<div class="abs" style="left:0px;top:684px;width:690px;height:1px;background:#fff;"></div>
<div class="abs" style="left:469px;top:686px;width:1px;height:20px;background:#d7d7d7;"></div>
<div class="abs" style="left:602px;top:686px;width:1px;height:20px;background:#d7d7d7;"></div>
<div class="abs" style="left:687px;top:686px;width:1px;height:20px;background:#d7d7d7;"></div>
</div>
<div class="abs" style="left:0px;top:870px;width:1600px;height:30px;background:rgba(165,166,168,.8);"></div>
<div class="abs" style="left:0px;top:870px;width:1600px;height:1px;background:rgba(255,255,255,.12);"></div>
<div class="abs" style="left:16px;top:871px;width:160px;height:28px;background:rgba(255,255,255,.14);border:1px solid rgba(255,255,255,.35)"></div>
<div class="abs" style="left:500px;top:871px;width:160px;height:28px;background:rgba(255,255,255,.14);border:1px solid rgba(255,255,255,.35)"></div>
<div class="abs" style="left:662px;top:871px;width:160px;height:28px;background:linear-gradient(rgba(255,255,255,.42),rgba(255,255,255,.27));border:1px solid rgba(255,255,255,.72)"></div>
<div class="t " style="left:46px;top:877px;color:#fff;letter-spacing:-0.17px">Доступ - Не удаётся...</div>
<div class="t " style="left:530px;top:877px;color:#fff">Загрузки</div>
<div class="t " style="left:692px;top:877px;color:#fff;letter-spacing:-0.05px">Управление дисками</div>
<div class="t " style="left:1481px;top:877px;color:#fff;letter-spacing:-0.3px">РУС</div>
<div class="t " style="left:1535px;top:877px;color:#fff;letter-spacing:-0.9px">18:54</div>
<svg style="left:0;top:0" width="1600" height="900" viewBox="0 0 1600 900"><g transform="translate(34,885)"><circle r="7.500" fill="#e33b2e"/><path d="M0 0 L-6.500 -3.750 A7.500 7.500 0 0 0 -0.500 7.480Z" fill="#35a853"/><path d="M0 0 L-0.500 7.480 A7.500 7.500 0 0 0 7.300 -1.800 L0 -1Z" fill="#fbd01c"/><circle r="3.600" fill="#fff"/><circle r="2.800" fill="#4a8af4"/></g><g transform="translate(200,884.500)"><circle r="8" fill="#fff"/><circle r="7" fill="#12803c"/><path d="M-3.500 -3.500 V1.500 Q-3.500 4 -0.500 4 Q2 4 2.500 1.500 V-3.500 M2.500 1.500 Q2.800 4 4.500 3.500" stroke="#fff" stroke-width="2" fill="none"/></g><g transform="translate(238,877)"><rect x="1" y="1" width="9" height="8" fill="#7cc46a" stroke="#e8f4e0" stroke-width=".8"/><rect x="4" y="4" width="9" height="8" fill="#6aa8e0" stroke="#e8f0fa" stroke-width=".8"/><rect x="8" y="8" width="9" height="8" fill="#f0d060" stroke="#fff6d0" stroke-width=".8"/></g><g transform="translate(286,877)"><rect x="1.500" y="2" width="12" height="14" fill="#bfe0f4" stroke="#6a9cc0" stroke-width=".8"/><path d="M3 5h9M3 7.500h9M3 10h9M3 12.500h9" stroke="#8cc0e4" stroke-width=".8"/><path d="M2 2 h11" stroke="#4a5a68" stroke-width="1.600" stroke-dasharray="1 1"/></g><g transform="translate(330,877)"><ellipse cx="7.500" cy="10" rx="7" ry="5.500" fill="#e8eef8" stroke="#6a86b8" stroke-width=".9"/><circle cx="4.500" cy="9" r="1.300" fill="#e33"/><circle cx="7.500" cy="7.500" r="1.300" fill="#3a3"/><circle cx="10.500" cy="9" r="1.300" fill="#36d"/><circle cx="6" cy="12.500" r="1.300" fill="#fc3"/><path d="M12 13 L14.500 2" stroke="#e89030" stroke-width="1.800"/></g><g transform="translate(377,876)"><rect x="1.500" y="1.500" width="11" height="15" rx="1" fill="#eaf2fc" stroke="#5a8ad0" stroke-width="1"/><rect x="3" y="3" width="8" height="3.500" fill="#9cc4f0"/><path d="M3.500 8.500h1.500M6.250 8.500h1.500M9 8.500h1.500M3.500 11h1.500M6.250 11h1.500M9 11h1.500M3.500 13.500h1.500M6.250 13.500h1.500M9 13.500h1.500" stroke="#4a7ac8" stroke-width="1.400"/></g><g transform="translate(422,876)"><rect x="7" y="2.500" width="9" height="12" fill="#fff" stroke="#1e7145" stroke-width=".9"/><path d="M10 5h5M10 7.500h5M10 10h5M10 12.500h5" stroke="#1e7145" stroke-width="1"/><path d="M0 2 L10 .5 V17 L0 15.500Z" fill="#1e7145"/><path d="M2.800 5.500 L7 12 M7 5.500 L2.800 12" stroke="#fff" stroke-width="1.600"/></g><g transform="translate(468,876)"><rect x="7" y="2.500" width="9" height="12" fill="#fff" stroke="#2b579a" stroke-width=".9"/><path d="M10 5h5M10 7.500h5M10 10h5M10 12.500h5" stroke="#2b579a" stroke-width="1"/><path d="M0 2 L10 .5 V17 L0 15.500Z" fill="#2b579a"/><path d="M2 6 L3.500 12 L5 7.500 L6.500 12 L8 6" stroke="#fff" stroke-width="1.300" fill="none"/></g><g transform="translate(510,876)"><path d="M1 2 H8 V16 H1Z" fill="#e8c860" stroke="#b89430" stroke-width=".8"/><path d="M4 1 H10 V15 H4Z" fill="#f6e08a" stroke="#c8a440" stroke-width=".8"/><path d="M8 7 H12 V11 H14.500 L10 16 L5.500 11 H8Z" fill="#2a8ae0" stroke="#1a5aa8" stroke-width=".8"/></g><g transform="translate(671,877)"><path d="M.8 2 H12.500 Q15.500 2.300 15.500 5 V8.500 H.8Z" fill="#f0f0f4" stroke="#8a8a96" stroke-width=".8"/><path d="M1.500 6.800 Q5 5.800 9 7.500" stroke="#222" stroke-width="1.100" fill="none"/><rect x="10.500" y="4" width="2" height="3.500" fill="#3be01e"/><rect x=".8" y="8.500" width="13.500" height="7.500" fill="#8494a0" stroke="#56646e" stroke-width=".8"/><rect x="2" y="11.500" width="9" height="1.800" fill="#4e5c66"/><rect x="9.500" y="10.800" width="1.500" height="1.500" fill="#f4f4f4"/></g><g transform="translate(1377,877)"><rect x="2.800" y="1.300" width="4.800" height="5" fill="#e4e4e8" stroke="#9a9aa2" stroke-width=".6"/><path d="M1.200 6 H9.200 V11.500 Q9.200 14 7 14.500 L6.300 17.200 H4.200 L3.500 14.500 Q1.200 14 1.200 11.500Z" fill="#6c6c74" stroke="#55555c" stroke-width=".6"/><circle cx="12" cy="11.700" r="4.900" fill="#27a027" stroke="#1c7c1c" stroke-width=".6"/><path d="M9.300 11.800 L11.300 14 L14.600 9.300" stroke="#fff" stroke-width="1.600" fill="none"/></g><g transform="translate(1401,877)"><rect x="2" y="1.200" width="15" height="13.800" fill="#2b8be2"/><path d="M12.500 4h3.500M12.500 6.500h3.500M12.500 9h3.500M12.500 11.500h3.500" stroke="#d6e8fb" stroke-width="1"/><path d="M10 15.500 H17" stroke="#111" stroke-width="1"/><circle cx="7.600" cy="10.700" r="5.600" fill="none" stroke="#5cb4f4" stroke-width="1.800"/><circle cx="7.600" cy="10.700" r="5.600" fill="none" stroke="#0c0c10" stroke-width="1.800" stroke-dasharray="3.500 2.400"/><circle cx="7.600" cy="10.700" r="3.700" fill="#cfcfd2"/><circle cx="7.300" cy="10.300" r="2" fill="#f6f6f6"/></g><g transform="translate(1425,877)" fill="none" stroke="#fff"><path d="M1.500 6 H4 L8 2.500 V14.500 L4 11 H1.500Z" fill="#fff" stroke-width=".8"/><path d="M10 6 Q11.500 8.500 10 11" stroke-width="1.200"/><path d="M12 4 Q15 8.500 12 13" stroke-width="1.200"/><path d="M14 2.500 Q18 8.500 14 14.500" stroke-width="1.100" opacity=".8"/></g><g transform="translate(1451,877)" fill="none" stroke="#fff" stroke-width="1.300"><rect x=".8" y="2.200" width="4.200" height="5" rx="1.600"/><path d="M2.900 7.200 V15.300 M.8 15.300 H5.500"/><path d="M5 3.300 H14.700 V11.800 H5.200"/><path d="M10 11.800 V14.500 M5.800 15 H13"/></g></svg>
</body></html>
